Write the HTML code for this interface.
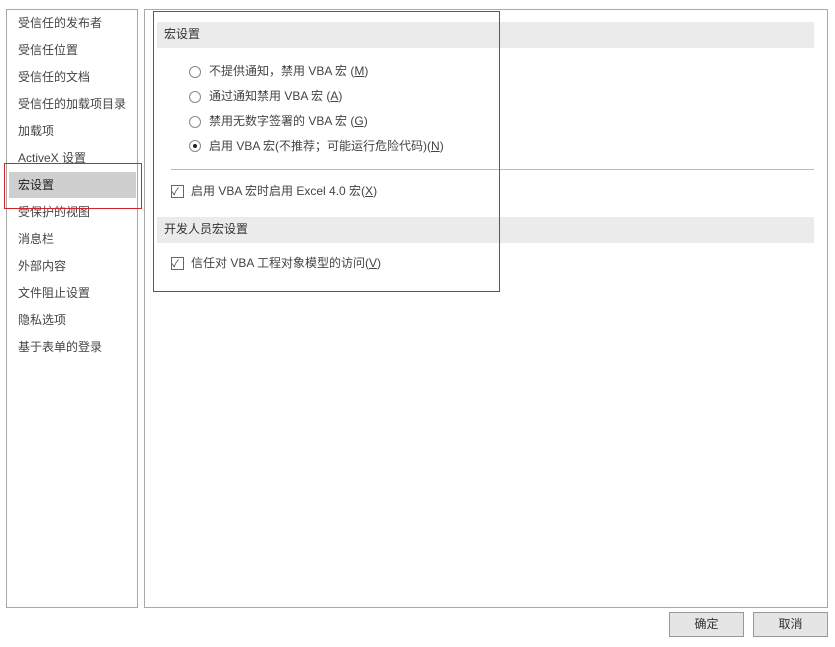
<!DOCTYPE html>
<html><head><meta charset="utf-8"><style>
body{margin:0;width:835px;height:647px;background:#fff;font-family:"Liberation Sans","Noto Sans CJK SC",sans-serif;font-size:12px;color:#444;position:relative;overflow:hidden}
.a{position:absolute}
.it{position:absolute;left:18px;line-height:16px}
.rad{position:absolute;width:10px;height:10px;border:1px solid #888;border-radius:50%;background:#fff}
.chk{position:absolute;width:11px;height:11px;border:1px solid #666;background:#fff}
u{text-decoration:underline}
</style></head><body>
<div class="a" style="left:6px;top:9px;width:130px;height:597px;border:1px solid #a9a9a9"></div>
<div class="a" style="left:9px;top:172px;width:127px;height:26px;background:#cfcfcf"></div>
<div class="it" style="top:15px">受信任的发布者</div>
<div class="it" style="top:42px">受信任位置</div>
<div class="it" style="top:69px">受信任的文档</div>
<div class="it" style="top:96px">受信任的加载项目录</div>
<div class="it" style="top:123px">加载项</div>
<div class="it" style="top:150px">ActiveX 设置</div>
<div class="it" style="top:177px;color:#222">宏设置</div>
<div class="it" style="top:204px">受保护的视图</div>
<div class="it" style="top:231px">消息栏</div>
<div class="it" style="top:258px">外部内容</div>
<div class="it" style="top:285px">文件阻止设置</div>
<div class="it" style="top:312px">隐私选项</div>
<div class="it" style="top:339px">基于表单的登录</div>
<div class="a" style="left:4px;top:163px;width:136px;height:44px;border:1px solid #d0252b"></div>

<div class="a" style="left:144px;top:9px;width:682px;height:597px;border:1px solid #a9a9a9"></div>
<div class="a" style="left:157px;top:22px;width:657px;height:26px;background:#ebebeb"></div>
<div class="a" style="left:164px;top:26px;line-height:16px;color:#333">宏设置</div>
<div class="rad" style="left:189px;top:66px"></div><div class="a" style="left:209px;top:63px;line-height:16px">不提供通知，禁用 VBA 宏 (<u>M</u>)</div>
<div class="rad" style="left:189px;top:91px"></div><div class="a" style="left:209px;top:88px;line-height:16px">通过通知禁用 VBA 宏 (<u>A</u>)</div>
<div class="rad" style="left:189px;top:116px"></div><div class="a" style="left:209px;top:113px;line-height:16px">禁用无数字签署的 VBA 宏 (<u>G</u>)</div>
<div class="rad" style="left:189px;top:140px"></div><div class="a" style="left:193px;top:144px;width:4px;height:4px;border-radius:50%;background:#222"></div><div class="a" style="left:209px;top:138px;line-height:16px">启用 VBA 宏(不推荐；可能运行危险代码)(<u>N</u>)</div>
<div class="a" style="left:171px;top:169px;width:643px;height:1px;background:#bbb"></div>
<div class="chk" style="left:171px;top:185px"></div><div class="a" style="left:172px;top:183px;font-size:10px;color:#333">✓</div><div class="a" style="left:191px;top:183px;line-height:16px">启用 VBA 宏时启用 Excel 4.0 宏(<u>X</u>)</div>
<div class="a" style="left:157px;top:217px;width:657px;height:26px;background:#ebebeb"></div>
<div class="a" style="left:164px;top:221px;line-height:16px;color:#333">开发人员宏设置</div>
<div class="chk" style="left:171px;top:257px"></div><div class="a" style="left:172px;top:255px;font-size:10px;color:#333">✓</div><div class="a" style="left:191px;top:255px;line-height:16px">信任对 VBA 工程对象模型的访问(<u>V</u>)</div>
<div class="a" style="left:153px;top:11px;width:345px;height:279px;border:1px solid #d0252b"></div>

<div class="a" style="left:669px;top:612px;width:73px;height:23px;border:1px solid #999;background:#e5e5e5;text-align:center;line-height:23px;color:#333">确定</div>
<div class="a" style="left:753px;top:612px;width:73px;height:23px;border:1px solid #999;background:#e5e5e5;text-align:center;line-height:23px;color:#333">取消</div>
</body></html>
